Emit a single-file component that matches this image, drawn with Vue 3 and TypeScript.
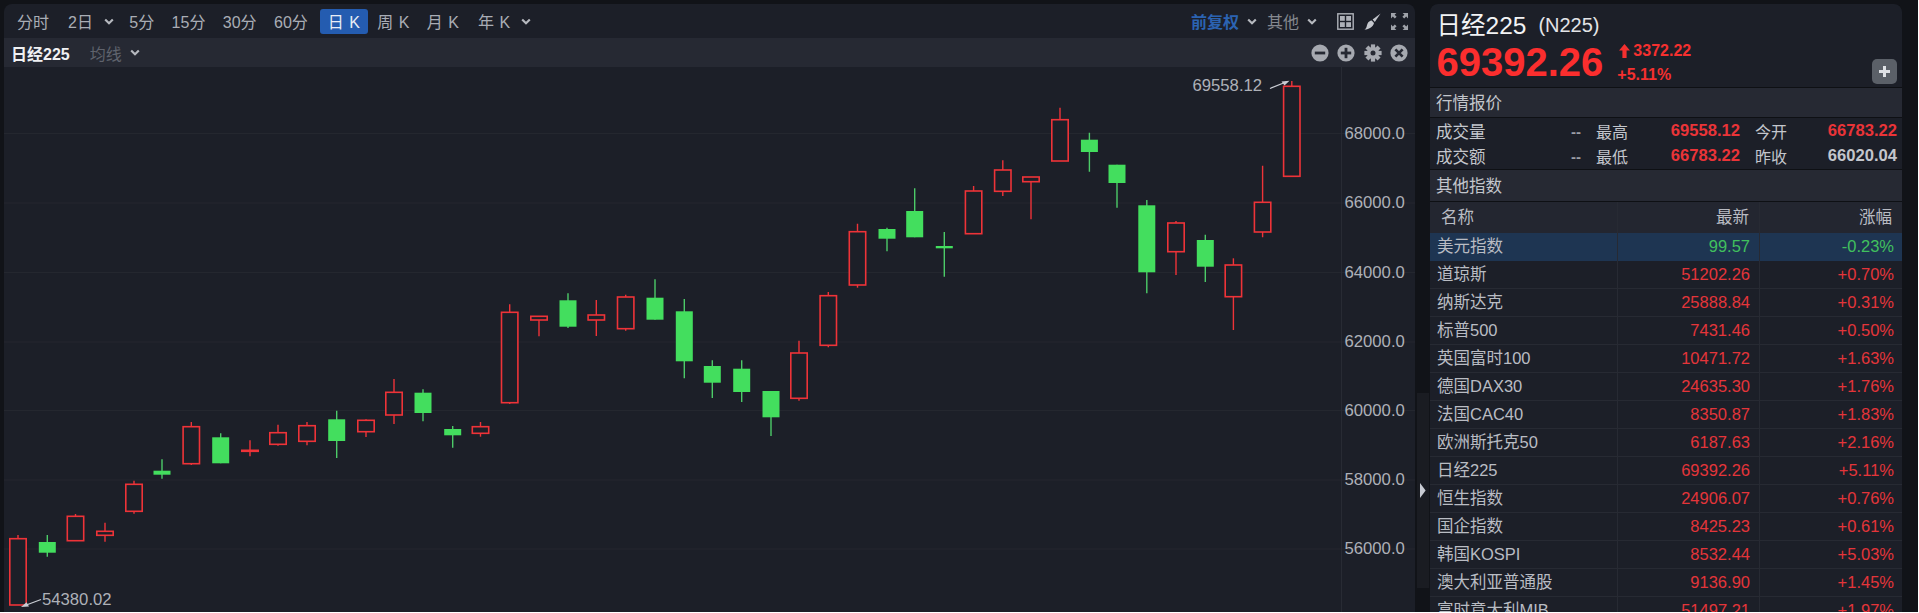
<template>
  <div class="app">
    <section class="chart-panel">
      <div class="toolbar">
        <div class="tabs">
          <span v-for="t in tabs" :key="t.label" class="tab" :class="{ active: t.active }">
            {{ t.label }}
            <svg v-if="t.menu" class="chev" width="10" height="7" viewBox="0 0 10 7"><path d="M1.2 1.5 5 5.2l3.8-3.7" /></svg>
          </span>
        </div>
        <div class="tools">
          <span class="tool blue">前复权<svg class="chev" width="10" height="7" viewBox="0 0 10 7"><path d="M1.2 1.5 5 5.2l3.8-3.7" /></svg></span>
          <span class="tool">其他<svg class="chev" width="10" height="7" viewBox="0 0 10 7"><path d="M1.2 1.5 5 5.2l3.8-3.7" /></svg></span>
          <svg class="ico" width="17" height="17" viewBox="0 0 17 17">
            <rect x="0.8" y="0.8" width="15.4" height="15.4" fill="none" stroke="#aeb1b8" stroke-width="1.4" />
            <rect x="3" y="3" width="4.8" height="4.8" fill="#aeb1b8" />
            <rect x="9.2" y="3" width="4.8" height="4.8" fill="#aeb1b8" />
            <rect x="3" y="9.2" width="4.8" height="4.8" fill="#aeb1b8" />
            <rect x="9.2" y="9.2" width="4.8" height="4.8" fill="#aeb1b8" />
          </svg>
          <svg class="ico" width="17" height="17" viewBox="0 0 17 17">
            <path d="M16.6 0.4 8.6 6.6l2.2 2.3Z" fill="#c4c7cd" />
            <path d="M7.7 7.6 10 9.9c-.7 3.6-4.4 6.3-9.6 6.7 2.6-1.7 2-3.5 3.2-6.2.7-1.5 2.4-2.7 4.1-2.8Z" fill="#c4c7cd" />
          </svg>
          <svg class="ico" width="17" height="17" viewBox="0 0 17 17" fill="#9fa2a9">
            <path d="M0 0h5.4L3.6 1.8l2 2-1.8 1.8-2-2L0 5.4Z" />
            <path d="M17 0v5.4l-1.8-1.8-2 2-1.8-1.8 2-2L11.6 0Z" />
            <path d="M0 17v-5.4l1.8 1.8 2-2 1.8 1.8-2 2L5.4 17Z" />
            <path d="M17 17h-5.4l1.8-1.8-2-2 1.8-1.8 2 2 1.8-1.8Z" />
          </svg>
        </div>
      </div>

      <div class="subbar">
        <div class="subbar-left">
          <span class="sym">日经225</span>
          <span class="ma">均线<svg class="chev" width="10" height="7" viewBox="0 0 10 7"><path d="M1.2 1.5 5 5.2l3.8-3.7" /></svg></span>
        </div>
        <div class="subbar-right">
          <svg width="18" height="18" viewBox="0 0 18 18"><circle cx="9" cy="9" r="8.6" fill="#a6a9b0" /><rect x="3.8" y="7.6" width="10.4" height="2.8" fill="#262933" /></svg>
          <svg width="18" height="18" viewBox="0 0 18 18"><circle cx="9" cy="9" r="8.6" fill="#a6a9b0" /><rect x="3.8" y="7.6" width="10.4" height="2.8" fill="#262933" /><rect x="7.6" y="3.8" width="2.8" height="10.4" fill="#262933" /></svg>
          <svg width="18" height="18" viewBox="0 0 18 18">
            <rect v-for="a in [0, 45, 90, 135, 180, 225, 270, 315]" :key="a" x="6.9" y="0.4" width="4.2" height="4" fill="#a6a9b0" :transform="`rotate(${a} 9 9)`" />
            <circle cx="9" cy="9" r="6.1" fill="#a6a9b0" />
            <circle cx="9" cy="9" r="2.5" fill="#262933" />
          </svg>
          <svg width="18" height="18" viewBox="0 0 18 18"><circle cx="9" cy="9" r="8.6" fill="#a6a9b0" /><path d="M5.4 5.4l7.2 7.2M12.6 5.4l-7.2 7.2" stroke="#262933" stroke-width="2.7" /></svg>
        </div>
      </div>

      <div class="chart">
        <svg class="plot" viewBox="4 67 1411 545" width="1411" height="545">
          <line v-for="l in axis" :key="l.text" x1="4" :y1="l.y" x2="1415" :y2="l.y" stroke="#24272f" />
          <line x1="1341.5" y1="67" x2="1341.5" y2="612" stroke="#282b34" />
          <text v-for="l in axis" :key="'t' + l.text" x="1344.5" :y="l.y + 5" class="lbl">{{ l.text }}</text>
          <g v-for="c in candles" :key="c.x">
            <line :x1="c.x" :y1="c.hi" :x2="c.x" :y2="c.lo" :stroke="c.up ? '#ee3338' : '#4ccb68'" stroke-width="1.4" />
            <rect v-if="c.up" :x="c.x - 8.2" :y="c.top" width="16.4" :height="c.bot - c.top" fill="#1c1f28" stroke="#ee3338" stroke-width="1.6" />
            <rect v-else :x="c.x - 8.5" :y="c.top" width="17" :height="c.bot - c.top" fill="#43de5e" />
          </g>
          <text x="1192.5" y="90.5" class="lbl">69558.12</text>
          <path d="M1270 88.5 1286 82" stroke="#c9ccd3" stroke-width="1.3" fill="none" />
          <path d="M1289.5 80.8 1281.5 81.4 1284.5 85.6Z" fill="#c9ccd3" />
          <text x="42" y="605" class="lbl">54380.02</text>
          <path d="M41 599.5 25 605.5" stroke="#c9ccd3" stroke-width="1.3" fill="none" />
          <path d="M21 607 29 606.6 26.6 602.2Z" fill="#c9ccd3" />
        </svg>
      </div>
    </section>

    <div class="splitter">
      <div class="handle">
        <svg width="6" height="15" viewBox="0 0 6 15"><path d="M0 0 5.6 7.5 0 15Z" fill="#c9ccd3" /></svg>
      </div>
    </div>

    <aside class="side">
      <header class="head">
        <div class="title-row">
          <span class="title">日经225</span>
          <span class="code">(N225)</span>
        </div>
        <div class="price-row">
          <span class="price">69392.26</span>
          <div class="change">
            <span class="chg-abs">
              <svg width="11" height="14" viewBox="0 0 11 14"><path d="M5.5 0 11 6.6H7.6V14H3.4V6.6H0Z" fill="#f5302f" /></svg>3372.22
            </span>
            <span class="chg-pct">+5.11%</span>
          </div>
        </div>
        <div class="add">
          <svg width="13" height="13" viewBox="0 0 13 13"><path d="M5 1h3v4h4v3H8v4H5V8H1V5h4Z" fill="#dfe1e5" /></svg>
        </div>
      </header>

      <h3 class="section quote-title">行情报价</h3>
      <div class="quotes">
        <div v-for="q in quotes" :key="q[0]" class="quote-row">
          <span class="q-label">{{ q[0] }}</span>
          <span class="q-dash">--</span>
          <span class="q-mid">{{ q[1] }}</span>
          <span class="q-val red">{{ q[2] }}</span>
          <span class="q-last">{{ q[3] }}</span>
          <span class="q-val" :class="q[5]">{{ q[4] }}</span>
        </div>
      </div>

      <h3 class="section other-title">其他指数</h3>
      <div class="table">
        <div class="row thead">
          <span class="c-name">名称</span>
          <span class="c-num">最新</span>
          <span class="c-pct">涨幅</span>
        </div>
        <div v-for="(r, i) in rows" :key="r[0]" class="row" :class="{ hl: i === 0 }">
          <span class="c-name">{{ r[0] }}</span>
          <span class="c-num" :class="i === 0 ? 'dn' : 'up'">{{ r[1] }}</span>
          <span class="c-pct" :class="i === 0 ? 'dn' : 'up'">{{ r[2] }}</span>
        </div>
      </div>
    </aside>
  </div>
</template>

<script setup lang="ts">
const tabs = [
  { label: '分时' },
  { label: '2日', menu: true },
  { label: '5分' },
  { label: '15分' },
  { label: '30分' },
  { label: '60分' },
  { label: '日 K', active: true },
  { label: '周 K' },
  { label: '月 K' },
  { label: '年 K', menu: true }
]

const axis = [
  { text: '68000.0', y: 133.5 },
  { text: '66000.0', y: 203 },
  { text: '64000.0', y: 272.5 },
  { text: '62000.0', y: 342 },
  { text: '60000.0', y: 410.5 },
  { text: '58000.0', y: 480 },
  { text: '56000.0', y: 549 }
]

// x, body top, body bottom, high, low, up
const raw: [number, number, number, number, number, number][] = [
  [18, 538.7, 605, 535, 605, 1],
  [47.3, 542, 552.7, 535, 556.7, 0],
  [75.5, 516.3, 540.7, 514, 540.7, 1],
  [105, 531.3, 535.3, 522.7, 541.7, 1],
  [134, 484.3, 511.3, 480.7, 513.7, 1],
  [162, 470.7, 474.7, 459.3, 478.7, 0],
  [191.3, 426.7, 463.7, 422, 465, 1],
  [220.7, 437.3, 463.3, 433.3, 463.3, 0],
  [250, 450.3, 451.3, 440.3, 456.3, 1],
  [278, 432.7, 444.3, 424.7, 445.7, 1],
  [307, 425.7, 441.3, 422, 445.3, 1],
  [336.7, 419.3, 441, 410.7, 458, 0],
  [366, 420.3, 431.7, 419.3, 437, 1],
  [394, 392.3, 415, 379, 424, 1],
  [423, 392.7, 413, 389.3, 421.3, 0],
  [452.7, 429, 435.3, 426, 447.7, 0],
  [480.5, 426.7, 433.3, 422, 436.7, 1],
  [509.7, 312.3, 402.7, 304.3, 404, 1],
  [539, 316.3, 320, 316, 336.3, 1],
  [568, 300.3, 326.7, 293.3, 328, 0],
  [596.3, 315, 320, 300, 336, 1],
  [625.7, 297, 328.7, 294.7, 330.7, 1],
  [655, 297.7, 319.7, 279.3, 319.7, 0],
  [684.3, 311.3, 361.3, 299, 378.3, 0],
  [712.3, 366, 382.7, 360.3, 398, 0],
  [741.7, 368.7, 392, 360.3, 402, 0],
  [771, 391, 417.3, 391, 436, 0],
  [799, 353, 398.3, 340.7, 400.7, 1],
  [828.3, 295.7, 345.3, 292, 347.3, 1],
  [857.5, 231.7, 285, 223.7, 287.7, 1],
  [887, 229, 238.7, 227.7, 251.3, 0],
  [914.7, 211, 237.3, 188.3, 237.3, 0],
  [944.3, 246, 248.3, 232, 276.7, 0],
  [973.6, 191, 233.7, 186, 233.7, 1],
  [1002.8, 170, 191.3, 160.3, 196, 1],
  [1031, 177, 181.7, 177, 219.3, 1],
  [1060, 119.7, 161, 107.7, 161, 1],
  [1089.4, 139.7, 152, 132.7, 171.7, 0],
  [1117, 164.7, 183, 164.7, 207.7, 0],
  [1146.8, 205.3, 272.3, 200, 293.3, 0],
  [1176, 223, 251.7, 221, 275, 1],
  [1205.3, 240, 266.7, 234.7, 282, 0],
  [1233.4, 265, 296.7, 258.3, 330, 1],
  [1262.6, 202.3, 232, 165.7, 237.3, 1],
  [1291.8, 86.3, 176.3, 81, 176.3, 1]
]

const candles = raw.map(([x, top, bot, hi, lo, up]) => ({ x, top, bot, hi, lo, up: up === 1 }))

const quotes = [
  ['成交量', '最高', '69558.12', '今开', '66783.22', 'red'],
  ['成交额', '最低', '66783.22', '昨收', '66020.04', 'grey']
]

const rows = [
  ['美元指数', '99.57', '-0.23%'],
  ['道琼斯', '51202.26', '+0.70%'],
  ['纳斯达克', '25888.84', '+0.31%'],
  ['标普500', '7431.46', '+0.50%'],
  ['英国富时100', '10471.72', '+1.63%'],
  ['德国DAX30', '24635.30', '+1.76%'],
  ['法国CAC40', '8350.87', '+1.83%'],
  ['欧洲斯托克50', '6187.63', '+2.16%'],
  ['日经225', '69392.26', '+5.11%'],
  ['恒生指数', '24906.07', '+0.76%'],
  ['国企指数', '8425.23', '+0.61%'],
  ['韩国KOSPI', '8532.44', '+5.03%'],
  ['澳大利亚普通股', '9136.90', '+1.45%'],
  ['富时意大利MIB', '51497.21', '+1.97%']
]
</script>

<style scoped>
.app {
  width: 1918px;
  height: 612px;
  box-sizing: border-box;
  padding: 4px 16px 0 4px;
  display: flex;
  overflow: hidden;
  background: #111318;
  font-family: "Liberation Sans", "Noto Sans CJK SC", sans-serif;
  color: #a9adb5;
}

.chart-panel {
  width: 1411px;
  flex: none;
  display: flex;
  flex-direction: column;
  background: #1c1f28;
  border-radius: 8px 8px 0 0;
  overflow: hidden;
}

.toolbar {
  height: 34px;
  flex: none;
  display: flex;
  align-items: center;
  justify-content: space-between;
  padding: 0 7px 0 5px;
}

.tabs {
  display: flex;
  gap: 1.4px;
  align-items: center;
  word-spacing: 1px;
}

.tab {
  display: flex;
  align-items: center;
  gap: 11px;
  height: 25px;
  padding: 0 8px;
  border-radius: 3px;
  font-size: 16px;
  white-space: nowrap;
}

.tab:nth-child(2) {
  margin: 0 -2px 0 1.6px;
}

.tab:nth-child(10) {
  margin-left: 1.6px;
}

.tab.active {
  background: #245cb0;
  color: #e8edf6;
  margin-left: 2.6px;
}

.chev {
  flex: none;
}

.chev path {
  fill: none;
  stroke: #b4b7bd;
  stroke-width: 2.2;
}

.tools {
  display: flex;
  align-items: center;
}

.tool {
  display: flex;
  align-items: center;
  gap: 8px;
  margin-right: 10px;
  font-size: 16px;
  color: #85888f;
}

.tool.blue {
  color: #2b63b2;
  font-weight: 700;
}

.ico {
  margin-left: 10px;
}

.subbar {
  height: 29px;
  flex: none;
  display: flex;
  align-items: center;
  justify-content: space-between;
  padding: 0 7px;
  background: #262933;
}

.subbar-left {
  display: flex;
  align-items: center;
  gap: 20px;
}

.sym {
  font-size: 16px;
  color: #f0f1f3;
  font-weight: 700;
}

.ma {
  display: flex;
  align-items: center;
  gap: 8px;
  font-size: 16px;
  color: #5f636d;
}

.subbar-right {
  display: flex;
  gap: 8.5px;
}

.chart {
  flex: 1;
  min-height: 0;
}

.plot {
  display: block;
}

.lbl {
  font-size: 16.7px;
  fill: #aeb1b8;
}

.splitter {
  width: 15px;
  flex: none;
  display: flex;
  align-items: flex-end;
  padding-bottom: 24px;
  box-sizing: border-box;
}

.handle {
  width: 12px;
  height: 195px;
  margin-left: 2px;
  display: flex;
  align-items: center;
  padding-left: 3px;
  box-sizing: border-box;
  background: #1a1c22;
}

.side {
  width: 472px;
  flex: none;
  display: flex;
  flex-direction: column;
  overflow: hidden;
  background: #0e1014;
  border-radius: 8px 8px 0 0;
}

.head {
  height: 83px;
  flex: none;
  position: relative;
  padding: 3px 0 0 6.5px;
  box-sizing: border-box;
  background: #1c1f28;
}

.title-row {
  display: flex;
  align-items: center;
  gap: 12px;
  height: 32px;
}

.title {
  font-size: 24.5px;
  color: #f2f3f5;
}

.code {
  font-size: 20px;
  color: #e3e4e7;
  padding-top: 5px;
}

.price-row {
  display: flex;
  align-items: center;
  gap: 14px;
}

.price {
  font-size: 40px;
  line-height: 46px;
  font-weight: 700;
  color: #fb2e2e;
}

.change {
  display: flex;
  flex-direction: column;
  gap: 6px;
  font-size: 16px;
  font-weight: 700;
  color: #f5302f;
  margin-top: 1px;
}

.chg-abs {
  display: flex;
  align-items: center;
  gap: 3px;
  padding-left: 2px;
  line-height: 18px;
}

.chg-pct {
  line-height: 18px;
}

.add {
  position: absolute;
  right: 5px;
  bottom: 3px;
  width: 25px;
  height: 25px;
  border-radius: 5px;
  background: #5b6068;
  display: flex;
  align-items: center;
  justify-content: center;
}

.section {
  margin: 0;
  flex: none;
  box-sizing: border-box;
  padding: 0 0 2px 6px;
  font-size: 16.5px;
  font-weight: 400;
  color: #c3c6cc;
  background: #262933;
  display: flex;
  align-items: center;
}

.quote-title {
  height: 29px;
  margin-top: 1px;
}

.other-title {
  height: 31px;
  margin-top: 1px;
}

.quotes {
  height: 51px;
  flex: none;
  margin-top: 1px;
  background: #1c1f28;
  display: flex;
  flex-direction: column;
  justify-content: center;
}

.quote-row {
  height: 25px;
  display: grid;
  grid-template-columns: 50px 95px 47px 112px 47px 110px;
  align-items: center;
  padding-left: 6px;
  font-size: 16.5px;
  white-space: nowrap;
  color: #c3c6cc;
}

.q-dash {
  text-align: right;
  font-weight: 700;
  color: #9b9ea5;
  font-size: 15px;
}

.q-mid,
.q-last {
  padding-left: 15px;
  font-size: 16px;
}

.q-val {
  text-align: right;
  font-weight: 700;
  font-size: 16.6px;
}

.red {
  color: #ea3438;
}

.grey {
  color: #c3c6cc;
}

.table {
  flex: 1;
  min-height: 0;
  margin-top: 1px;
}

.row {
  display: grid;
  grid-template-columns: 188px 142px 142px;
  height: 28px;
  box-sizing: border-box;
  border-bottom: 1px solid #272a33;
  background: #1c1f28;
  font-size: 16.5px;
  line-height: 27px;
  color: #b9bcc3;
}

.row span {
  border-right: 1px solid #272a33;
  white-space: nowrap;
}

.row span:last-child {
  border-right: none;
}

.thead {
  height: 31px;
  line-height: 31px;
  background: #232630;
  border-bottom: none;
}

.thead .c-name {
  padding-left: 11px;
}

.thead .c-num,
.thead .c-pct {
  padding-right: 10px;
}

.hl {
  background: #1e3552;
  border-bottom: none;
}

.c-name {
  padding-left: 7px;
}

.c-num {
  text-align: right;
  padding-right: 9px;
}

.c-pct {
  text-align: right;
  padding-right: 8px;
}

.up {
  color: #e4353a;
}

.dn {
  color: #41c05e;
}
</style>

<style>
html,
body {
  background: #fff;
}
</style>
